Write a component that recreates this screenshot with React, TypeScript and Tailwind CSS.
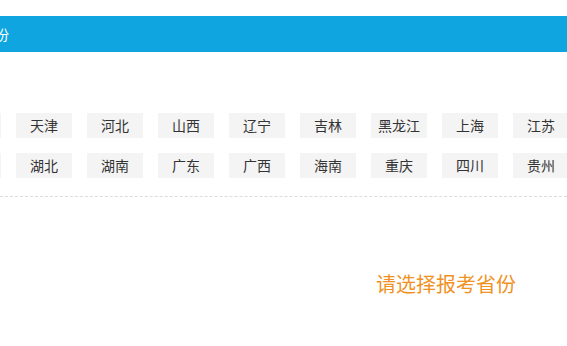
import React from "react";

const row1 = ["北京", "天津", "河北", "山西", "辽宁", "吉林", "黑龙江", "上海", "江苏", "浙江"];
const row2 = ["河南", "湖北", "湖南", "广东", "广西", "海南", "重庆", "四川", "贵州", "云南"];

function Row({ items }: { items: string[] }) {
  return (
    <div className="flex flex-nowrap gap-[15px] ml-[-55px]">
      {items.map((p) => (
        <div
          key={p}
          className="shrink-0 w-[56px] h-[25px] bg-[#f4f4f4] text-[#333] text-[14px] leading-[25px] text-center"
        >
          {p}
        </div>
      ))}
    </div>
  );
}

export default function App() {
  return (
    <div
      className="w-[567px] h-[346px] bg-white overflow-hidden relative"
      style={{ fontFamily: '"Microsoft YaHei", "Noto Sans CJK SC", sans-serif' }}
    >
      <div className="pt-[16px]">
        <div className="h-[36px] bg-[#0ea5e0] text-white text-[14px] leading-[36px] whitespace-nowrap overflow-hidden">
          <span className="ml-[-61px]">请选择省份</span>
        </div>
      </div>
      <div className="pt-[61px] flex flex-col gap-[15px] whitespace-nowrap">
        <Row items={row1} />
        <Row items={row2} />
      </div>
      <div className="mt-[18px] border-t border-dashed border-[#dcdcdc]" />
      <div className="pt-[77px] pl-[376px] text-[20px] leading-[20px] text-[#f0921f] whitespace-nowrap">
        请选择报考省份
      </div>
    </div>
  );
}
